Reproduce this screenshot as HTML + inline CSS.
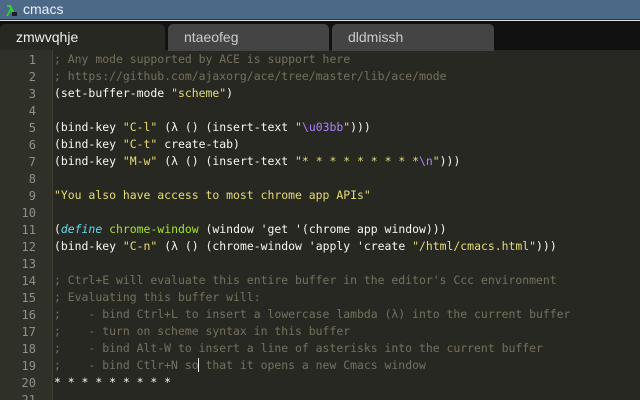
<!DOCTYPE html>
<html style="width:640px;height:400px;overflow:hidden"><head><style>
*{margin:0;padding:0;box-sizing:border-box}
body{width:640px;height:400px;overflow:hidden;background:#272822;font-family:"Liberation Sans",sans-serif;position:relative}
#title{position:absolute;left:0;top:0;width:640px;height:20px;background:#4c6a88;border-bottom:1px solid #2a3a4a;color:#eef;font-size:14px;line-height:19px;padding-left:23px}
#tabbar{position:absolute;left:0;top:20px;width:640px;height:30px;background:#111;border-top:1px solid #ddd}
.tab{position:absolute;top:3px;height:27px;border-radius:5px 5px 0 0;font-size:14px;line-height:27px;color:#ccc;padding-left:16px}
#gutter{position:absolute;left:0;top:50px;width:53px;height:350px;background:#2f3129;border-right:1px solid #3e3d32;overflow:hidden}
.ln{position:absolute;right:16px;font-family:"DejaVu Sans Mono",monospace;font-size:12px;color:#8f908a}
#code{position:absolute;left:54px;top:51px;height:349px;overflow:hidden;font-family:"DejaVu Sans Mono",monospace;font-size:11.45px;line-height:17px;color:#f8f8f2;white-space:pre}
.c{color:#75715e}.s{color:#e6db74}.e{color:#ae81ff}.k{color:#66d9ef;font-style:italic}.f{color:#a6e22e}
</style></head><body>
<div id="title"><svg style="position:absolute;left:4px;top:3px" width="14" height="14"><path d="M3 2 L7 2 L12 13 L9 13 L7 8 L4 13 L2 13 L6 6 L5 4 L3 4Z" fill="#3c3"/><rect x="8" y="9" width="5" height="4" fill="#222"/></svg>cmacs</div>
<div id="tabbar">
<div class="tab" style="left:0;width:165px;background:#272822;color:#f0f0f0">zmwvqhje</div>
<div class="tab" style="left:168px;width:161px;background:#444">ntaeofeg</div>
<div class="tab" style="left:332px;width:162px;background:#444">dldmissh</div>
</div>
<div id="gutter">
<div style="position:absolute;left:0;top:357px;width:53px;height:17px;background:#3a3b35"></div>
<div class="ln" style="top:3px">1</div><div class="ln" style="top:20px">2</div><div class="ln" style="top:37px">3</div><div class="ln" style="top:54px">4</div><div class="ln" style="top:71px">5</div><div class="ln" style="top:88px">6</div><div class="ln" style="top:105px">7</div><div class="ln" style="top:122px">8</div><div class="ln" style="top:139px">9</div><div class="ln" style="top:156px">10</div><div class="ln" style="top:173px">11</div><div class="ln" style="top:190px">12</div><div class="ln" style="top:207px">13</div><div class="ln" style="top:224px">14</div><div class="ln" style="top:241px">15</div><div class="ln" style="top:258px">16</div><div class="ln" style="top:275px">17</div><div class="ln" style="top:292px">18</div><div class="ln" style="top:309px">19</div><div class="ln" style="top:326px">20</div><div class="ln" style="top:343px">21</div>
</div>
<div id="code"><span class="c">; Any mode supported by ACE is support here</span>
<span class="c">; https://github.com/ajaxorg/ace/tree/master/lib/ace/mode</span>
(set-buffer-mode <span class="s">"scheme"</span>)

(bind-key <span class="s">"C-l"</span> (λ () (insert-text <span class="s">"<span class="e">\u03bb</span>"</span>)))
(bind-key <span class="s">"C-t"</span> create-tab)
(bind-key <span class="s">"M-w"</span> (λ () (insert-text <span class="s">"* * * * * * * * *<span class="e">\n</span>"</span>)))

<span class="s">"You also have access to most chrome app APIs"</span>

(<span class="k">define</span> <span class="f">chrome-window</span> (window 'get '(chrome app window)))
(bind-key <span class="s">"C-n"</span> (λ () (chrome-window 'apply 'create <span class="s">"/html/cmacs.html"</span>)))

<span class="c">; Ctrl+E will evaluate this entire buffer in the editor's Ccc environment</span>
<span class="c">; Evaluating this buffer will:</span>
<span class="c">;    - bind Ctrl+L to insert a lowercase lambda (λ) into the current buffer</span>
<span class="c">;    - turn on scheme syntax in this buffer</span>
<span class="c">;    - bind Alt-W to insert a line of asterisks into the current buffer</span>
<span class="c">;    - bind Ctlr+N so<span style="border-left:1px solid #f8f8f2;margin-left:-1px"></span> that it opens a new Cmacs window</span>
* * * * * * * * *</div>
</body></html>
